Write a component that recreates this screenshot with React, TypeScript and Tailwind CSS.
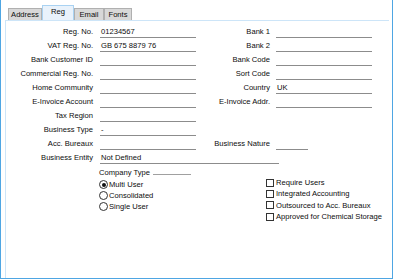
const tabs = ["Address", "Reg", "Email", "Fonts"];

const Field = ({ value, w = "w-[96px]" }: { value?: string; w?: string }) => (
  <div className={`${w} h-[11px] border-b border-[#8c8c8c] pl-[1px] leading-[10px]`}>{value}</div>
);

const Row = ({
  label,
  value,
  rLabel,
  rValue,
  rField = true,
  rShort = false,
}: {
  label: string;
  value?: string;
  rLabel?: string;
  rValue?: string;
  rField?: boolean;
  rShort?: boolean;
}) => (
  <div className="flex h-[14px] items-center">
    <div className="w-[87px] text-right">{label}</div>
    <div className="ml-[7px]">
      <Field value={value} />
    </div>
    {rLabel && <div className="w-[74px] text-right">{rLabel}</div>}
    {rLabel && rField && (
      <div className="ml-[6px]">
        <Field value={rValue} w={rShort ? "w-[32px]" : "w-[96px]"} />
      </div>
    )}
  </div>
);

const Radio = ({ label, checked }: { label: string; checked?: boolean }) => (
  <div className="flex h-[11px] items-center leading-[11px]">
    <div className="flex h-[9px] w-[9px] shrink-0 items-center justify-center rounded-full border border-[#333] bg-white">
      {checked && <div className="h-[4px] w-[4px] rounded-full bg-[#111]" />}
    </div>
    <span className="ml-[1px]">{label}</span>
  </div>
);

const Check = ({ label }: { label: string }) => (
  <div className="flex h-[11.3px] items-center leading-[11px]">
    <div className="h-[8px] w-[8px] shrink-0 border border-[#333] bg-white" />
    <span className="ml-[2px]">{label}</span>
  </div>
);

export default function App() {
  return (
    <div
      className="h-[279px] w-[393px] overflow-hidden border-x border-b border-[#4ea6e3] bg-white text-[7.6px] text-[#0d0d0d]"
      style={{ fontFamily: '"Liberation Sans", Arial, sans-serif' }}
    >
      <div className="flex h-[20px] items-end pl-[7px]">
        {tabs.map((t) =>
          t === "Reg" ? (
            <div
              key={t}
              className="flex h-[15px] w-[32px] items-center justify-center border border-b-0 border-[#a9d2f2] bg-[#e9f2fb] pb-[2px]"
            >
              {t}
            </div>
          ) : (
            <div
              key={t}
              className={`flex h-[12px] items-center justify-center border border-b-0 border-[#b0b0b0] bg-[#d8d8d8] ${
                t === "Address" ? "w-[34px]" : t === "Email" ? "w-[30px]" : "w-[28px]"
              }`}
            >
              {t}
            </div>
          )
        )}
      </div>
      <div className="ml-[4px] h-[258px] w-[384px] border-l border-t border-[#cde5f8] pt-[4px]">
        <Row label="Reg. No." value="01234567" rLabel="Bank 1" />
        <Row label="VAT Reg. No." value="GB 675 8879 76" rLabel="Bank 2" />
        <Row label="Bank Customer ID" rLabel="Bank Code" />
        <Row label="Commercial Reg. No." rLabel="Sort Code" />
        <Row label="Home Community" rLabel="Country" rValue="UK" />
        <Row label="E-Invoice Account" rLabel="E-Invoice Addr." />
        <Row label="Tax Region" />
        <Row label="Business Type" value="-" />
        <Row label="Acc. Bureaux" rLabel="Business Nature" rShort />
        <div className="flex h-[14px] items-center">
          <div className="w-[87px] text-right">Business Entity</div>
          <div className="ml-[7px]">
            <Field value="Not Defined" w="w-[179px]" />
          </div>
        </div>
        <div className="mt-[2px] flex">
          <div className="ml-[93px] w-[167px]">
            <div className="flex h-[12px] items-center">
              <span>Company Type</span>
              <div className="ml-[3px] mt-[3px] w-[38px] border-b border-[#a0a0a0]" />
            </div>
            <Radio label="Multi User" checked />
            <Radio label="Consolidated" />
            <Radio label="Single User" />
          </div>
          <div className="pt-[10px]">
            <Check label="Require Users" />
            <Check label="Integrated Accounting" />
            <Check label="Outsourced to Acc. Bureaux" />
            <Check label="Approved for Chemical Storage" />
          </div>
        </div>
      </div>
    </div>
  );
}
